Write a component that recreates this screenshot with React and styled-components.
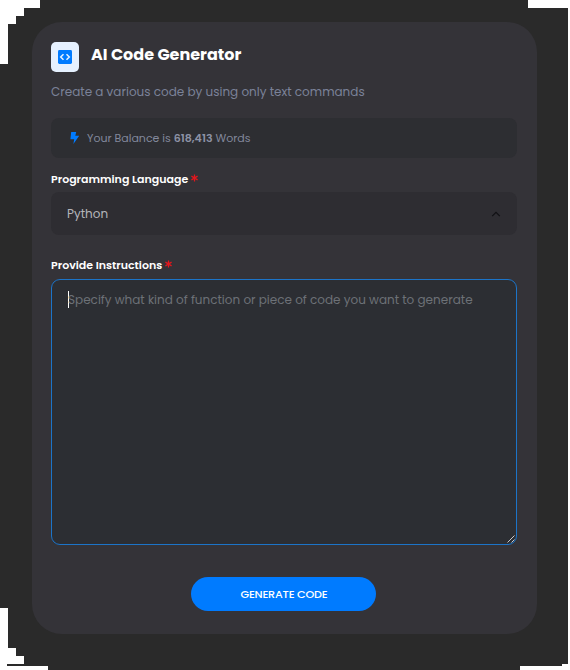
import React from "react";
import styled, { createGlobalStyle } from "styled-components";

const GlobalStyle = createGlobalStyle`
  * { box-sizing: border-box; }
  body { margin: 0; background: #fff; overflow: hidden; font-family: Poppins, Inter, sans-serif; }
`;

const Backdrop = styled.main`
  width: 568px;
  height: 670px;
  padding: 22px 31px 36px 32px;
  background: #2a2a2a;
  clip-path: polygon(
    40px 0, 528px 0, 528px 8px, 568px 8px, 568px 664px, 562px 664px, 562px 666px, 520px 666px,
    520px 670px, 48px 670px, 48px 666px, 7px 666px, 7px 664px, 24px 664px, 24px 656px,
    16px 656px, 16px 648px, 8px 648px, 8px 608px, 0 608px, 0 64px, 8px 64px, 8px 24px,
    16px 24px, 16px 16px, 24px 16px, 24px 8px, 40px 8px
  );
`;

const Card = styled.form`
  display: flex;
  flex-direction: column;
  height: 612px;
  padding: 20px 20px 23px 19px;
  border-radius: 30px;
  background: #343338;
`;

const Header = styled.header`
  display: flex;
  gap: 12px;
  height: 30px;
`;

const IconTile = styled.span`
  display: grid;
  place-items: center;
  width: 28px;
  height: 30px;
  border-radius: 5px;
  background: #e6f1ff;
`;

const Title = styled.h1`
  margin: 0;
  font-size: 16px;
  line-height: 25px;
  font-weight: 700;
  color: #fff;
  white-space: nowrap;
`;

const Subtitle = styled.p`
  margin: 10px 0 0;
  height: 36px;
  font-size: 12px;
  line-height: 20px;
  color: #7b8298;
  white-space: nowrap;
`;

const Balance = styled.div`
  display: flex;
  align-items: center;
  gap: 7px;
  height: 40px;
  padding: 0 18px;
  border-radius: 8px;
  background: #2d2e32;
  font-size: 11px;
  color: #82889c;
  white-space: pre;

  strong { font-weight: 600; color: #8d93a6; }
`;

const Label = styled.label`
  display: flex;
  gap: 3px;
  height: ${(p) => p.$height}px;
  margin-top: ${(p) => p.$top}px;
  font-size: 11px;
  line-height: 20px;
  font-weight: 600;
  color: #fff;
`;

const RequiredMark = styled.svg`
  width: 7px;
  height: 8px;
  margin-top: 5px;
`;

const Select = styled.div`
  display: flex;
  align-items: center;
  justify-content: space-between;
  height: 43px;
  padding: 0 16px;
  border-radius: 8px;
  background: #2e2d32;
  font-size: 12px;
  color: #b4b5ba;
`;

const Instructions = styled.div`
  display: flex;
  justify-content: space-between;
  height: 266px;
  padding: 10px 0 0 16px;
  border: 1px solid #1c74c8;
  border-radius: 9px;
  background: #2c2e33;
`;

const Placeholder = styled.span`
  height: 20px;
  font-size: 12px;
  line-height: 20px;
  color: #6d7177;
  white-space: nowrap;
`;

const Caret = styled.span`
  width: 1px;
  height: 17px;
  margin: 1px -1px 0 0;
  background: #fff;
`;

const TextLine = styled.div`
  display: flex;
`;

const ResizeGrip = styled.svg`
  align-self: flex-end;
  width: 10px;
  height: 10px;
`;

const SubmitButton = styled.button`
  width: 185px;
  height: 34px;
  margin: auto 0 0 140px;
  padding: 0 0 0 1px;
  border: 0;
  border-radius: 17px;
  background: #007bff;
  font: 500 11.2px/34px Poppins, Inter, sans-serif;
  letter-spacing: -0.2px;
  color: #fff;
`;

function Required() {
  return (
    <RequiredMark viewBox="0 0 7 8" stroke="#e3171d" strokeWidth="1.25" fill="none">
      <path d="M3.5 .4v7.2M.4 2.1l6.2 3.8M.4 5.9l6.2-3.8" />
    </RequiredMark>
  );
}

export default function App() {
  return (
    <>
      <GlobalStyle />
      <Backdrop>
        <Card>
          <Header>
            <IconTile>
              <svg width="14" height="14" viewBox="0 0 14 14">
                <rect width="14" height="14" rx="1.4" fill="#007bff" />
                <path d="M5.5 4.2 2.7 7l2.8 2.8M8.5 4.2 11.3 7 8.5 9.8" fill="none" stroke="#e6f1ff" strokeWidth="1.5" />
              </svg>
            </IconTile>
            <Title>AI Code Generator</Title>
          </Header>
          <Subtitle>Create a various code by using only text commands</Subtitle>
          <Balance>
            <svg width="11" height="12" viewBox="0 0 11 12">
              <path d="M2.2 0h5L6.3 3.8h3.9L4.4 12l.8-4.8H1.4z" fill="#007bff" />
            </svg>
            <span>Your Balance is <strong>618,413</strong> Words</span>
          </Balance>
          <Label $height={23} $top={11}>
            Programming Language<Required />
          </Label>
          <Select>
            Python
            <svg width="10" height="6" viewBox="0 0 10 6">
              <path d="M1.2 5.2 5 1.4l3.8 3.8" fill="none" stroke="#111114" strokeWidth="1.2" />
            </svg>
          </Select>
          <Label $height={24} $top={20}>
            Provide Instructions<Required />
          </Label>
          <Instructions>
            <TextLine>
              <Caret />
              <Placeholder>Specify what kind of function or piece of code you want to generate</Placeholder>
            </TextLine>
            <ResizeGrip viewBox="0 0 10 10" stroke="#c8c8ca" strokeWidth="1">
              <path d="M1.5 8.5 8.5 1.5M5.5 8.5l3-3" />
            </ResizeGrip>
          </Instructions>
          <SubmitButton type="button">GENERATE CODE</SubmitButton>
        </Card>
      </Backdrop>
    </>
  );
}
